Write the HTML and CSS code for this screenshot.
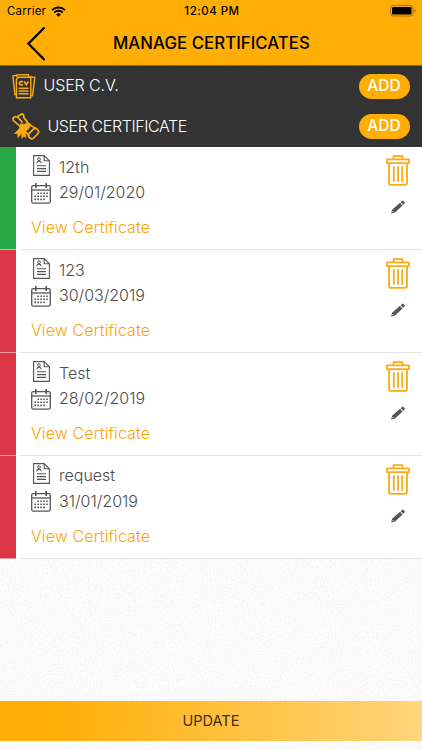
FILE: index.html
```html
<!DOCTYPE html>
<html lang="en">
<head>
    <meta charset="UTF-8">
    <meta name="viewport" content="width=device-width, initial-scale=1.0">
    <title>Manage Certificates</title>
    <link rel="stylesheet" href="styles.css">
</head>
<body>

    <!-- Icon definitions -->
    <svg class="icon-defs" width="0" height="0">
        <symbol id="icon-doc" viewBox="0 0 17 21">
            <path d="M.6.6h10.6l5.2 5.2v14.6H.6zM11.2.6v5.2h5.2M4 10.8h9M4 13.6h9M4 16.4h9" fill="none" stroke="#555" stroke-width="1.1"/>
            <circle cx="6" cy="4.2" r="1.4" fill="none" stroke="#555"/>
            <path d="M3.8 8.2c.2-1.6 1-2 2.2-2s2 .4 2.2 2" fill="none" stroke="#555" stroke-width="1.2"/>
        </symbol>
        <symbol id="icon-calendar" viewBox="0 0 20 21">
            <rect x=".7" y="2.7" width="18.6" height="17.4" rx="1.5" fill="none" stroke="#555" stroke-width="1.3"/>
            <path d="M.7 7h18.6" stroke="#555" stroke-width="1.3"/>
            <path d="M4.8 0v5M15.2 0v5" stroke="#555" stroke-width="1.6"/>
            <path d="M6.4 10.2h10.4M3.4 13.3h13.4M3.4 16.4h10.4" stroke="#555" stroke-width="1.6" stroke-dasharray="1.6 1.35"/>
        </symbol>
        <symbol id="icon-trash" viewBox="0 0 24 31">
            <path d="M7.5 4V1.2h9V4M1 4.3h22v3.8H1zM3 8.4v19.4q0 2 2 2h14q2 0 2-2V8.4" fill="none" stroke="#fcaa12" stroke-width="1.8" stroke-linejoin="round"/>
            <path d="M7.8 12v14M12 12v14M16.2 12v14" stroke="#fcaa12" stroke-width="1.8" stroke-linecap="round"/>
        </symbol>
        <symbol id="icon-pencil" viewBox="0 0 14 14">
            <path d="M.2 13.6l.9-3.8 7.9-7 2.5 2.7-7.7 7.2zM9.7 2.2l1.3-1.3q.7-.6 1.4 0l1.1 1.1q.6.7 0 1.4l-1.3 1.4z" fill="#555"/>
            <path d="M1.4 11l1.5 1.5" stroke="#fff" stroke-width=".8"/>
        </symbol>
    </svg>

    <!-- Header -->
    <div class="header">
        <div class="status-bar">
            <div class="carrier">
                <span>Carrier</span>
                <svg width="15" height="11" viewBox="0 0 15 11">
                    <path d="M1 4.2a9.2 9.2 0 0 1 13 0M3.3 6.5a6 6 0 0 1 8.4 0" fill="none" stroke="#000" stroke-width="1.9"/>
                    <path d="M7.5 10.8L5.2 8.4a3.3 3.3 0 0 1 4.6 0z"/>
                </svg>
            </div>
            <div class="time">12:04 PM</div>
            <svg class="battery" width="27" height="12" viewBox="0 0 27 12">
                <rect x=".5" y=".5" width="22.5" height="10.5" rx="2.6" fill="none" stroke="#a87300"/>
                <rect x="2" y="2" width="19.5" height="7.5" rx="1.3"/>
                <path d="M24.3 4v3.6q1.6-.5 1.6-1.8T24.3 4z" fill="#a87300"/>
            </svg>
        </div>
        <div class="nav-bar">
            <svg class="back" width="18" height="34" viewBox="0 0 18 34">
                <path d="M17 1L1.4 16.7 17 32.4" fill="none" stroke="#000" stroke-width="2.2" stroke-linecap="round"/>
            </svg>
            <h1>MANAGE CERTIFICATES</h1>
        </div>
    </div>

    <!-- Sections -->
    <div class="sections">
        <div class="section">
            <svg class="cv-icon" width="24" height="25" viewBox="0 0 24 25" fill="none" stroke="#fcaa12" stroke-width="1.4">
                <path d="M4.4 1.3L.9 2l2 18.6 1.5-.2M17 2.7l5.8.7-2.3 18.2-1.6-.2M5 3.2l-.1-2.3L16.4.7l.3 2"/>
                <path d="M6.6 3.2h12.2v20.6H4.4V5.4z"/>
                <path d="M6.6 14.2h10M6.6 17h10M6.6 19.8h10"/>
                <path d="M11 7.7Q7.4 7 7.4 9.2t3.6 1.6M12.2 7.5l2 3.2 2.2-3.2" stroke-width="1.7"/>
            </svg>
            <span class="section-name">USER C.V.</span>
            <button class="add-btn">ADD</button>
        </div>
        <div class="section">
            <svg class="scroll-icon" width="28" height="28" viewBox="0 0 28 28" fill="none" stroke="#fcaa12" stroke-width="1.7" stroke-linejoin="round">
                <path d="M8.5 13.6L2 8.2Q-.2 5.6 2 4.2t4.6.8l3.8 4.4"/>
                <path d="M5.4 3.4l4.8-2.6q2.1 1 1.5 3.6l4.2 5.2"/>
                <path d="M17.4 11.6l6.2 3.8M12.4 17.4l4.8 5.6"/>
                <rect x="15.8" y="17.4" width="11.4" height="6.4" rx="3.2" transform="rotate(-46 21.5 20.6)"/>
                <path d="M8.6 10.8l3.7.5 4-1.8 2.4 2-1.7 3.9-3.5 3-4.3-.5-1.9-2.7z" fill="#fcaa12" stroke-width=".8"/>
                <path d="M8.2 15l-5.6 5.4 3.2.2.2 4 5.2-6.2z" fill="#fcaa12" stroke-width=".8"/>
                <path d="M10.4 17l-.8 8.3 2.2-2 2.1 1.2-.6-7z" fill="#fcaa12" stroke-width=".6"/>
            </svg>
            <span class="section-name">USER CERTIFICATE</span>
            <button class="add-btn">ADD</button>
        </div>
    </div>

    <!-- Certificates -->
    <div class="certificates" id="certificates"></div>

    <!-- Paper texture -->
    <div class="spacer">
        <svg width="422" height="192">
            <filter id="grain" x="0" y="0" width="100%" height="100%" color-interpolation-filters="sRGB">
                <feTurbulence type="fractalNoise" baseFrequency="0.6" numOctaves="2" seed="4"/>
                <feColorMatrix values="0 0 0 0 0  0 0 0 0 0  0 0 0 0 0  .12 0 0 0 -.053"/>
            </filter>
            <rect width="422" height="192" filter="url(#grain)"/>
        </svg>
    </div>

    <button class="update-btn">UPDATE</button>

    <script>
        const certificates = [
            { name: "12th", date: "29/01/2020", status: "approved" },
            { name: "123", date: "30/03/2019", status: "rejected" },
            { name: "Test", date: "28/02/2019", status: "rejected" },
            { name: "request", date: "31/01/2019", status: "rejected" }
        ];

        const list = document.getElementById('certificates');

        certificates.forEach(cert => {
            const row = document.createElement('div');
            row.className = 'certificate';
            row.innerHTML = `
                <div class="status ${cert.status}"></div>
                <div class="details">
                    <div class="line"><svg class="doc"><use href="#icon-doc"/></svg><span>${cert.name}</span></div>
                    <div class="line"><svg class="calendar"><use href="#icon-calendar"/></svg><span>${cert.date}</span></div>
                    <a class="view">View Certificate</a>
                </div>
                <div class="actions">
                    <svg class="trash"><use href="#icon-trash"/></svg>
                    <svg class="pencil"><use href="#icon-pencil"/></svg>
                </div>`;
            list.appendChild(row);
        });
    </script>

</body>
</html>
```
FILE: styles.css
```css
body {
    margin: 0;
    height: 750px;
    display: flex;
    flex-direction: column;
    overflow: hidden;
    font-family: Inter, "Liberation Sans", sans-serif;
    background-color: #fdfdfd;
}
svg {
    display: block;
    flex-shrink: 0;
}
.icon-defs {
    position: absolute;
}
.header {
    height: 65px;
    background-color: #ffae05;
    border-bottom: 1px solid #8d681c;
    color: #000;
}
.status-bar {
    height: 22px;
    display: grid;
    grid-template-columns: 1fr auto 1fr;
    align-items: center;
    padding: 0 5px 0 7px;
    font-size: 11.5px;
}
.carrier {
    display: flex;
    align-items: center;
    gap: 5px;
    letter-spacing: 0.2px;
}
.time {
    font-weight: 500;
    letter-spacing: 0.5px;
}
.battery {
    justify-self: end;
}
.nav-bar {
    height: 43px;
    display: flex;
    align-items: center;
    padding-left: 27px;
}
h1 {
    margin: 0 0 0 68px;
    font-size: 16.8px;
    line-height: 43px;
    font-weight: 500;
    letter-spacing: 0.05px;
}
.sections {
    height: 81px;
    background-color: #333;
    box-sizing: border-box;
}
.section {
    height: 40.5px;
    display: flex;
    align-items: center;
    padding: 0 12.5px 0 12px;
    color: #fff;
}
.section-name {
    margin-left: 7.5px;
    padding-bottom: 2px;
    font-size: 16px;
    font-weight: 300;
    letter-spacing: -0.4px;
}
.cv-icon + .section-name {
    letter-spacing: -0.1px;
}
.add-btn {
    margin-left: auto;
    width: 51px;
    height: 25px;
    padding: 0 0 2px;
    border: none;
    border-radius: 13px;
    background-color: #ffae05;
    color: #fff;
    font-family: inherit;
    font-size: 15.5px;
    font-weight: 500;
    line-height: 23px;
}
.certificates {
    background-color: #fff;
}
.certificate {
    height: 102.9px;
    display: flex;
    background: linear-gradient(#e4e4e4, #e4e4e4) 20px 100% / 100% 1px no-repeat;
}
.status {
    width: 16px;
    box-sizing: border-box;
    border-bottom: 1px solid rgba(255, 255, 255, 0.5);
}
.approved {
    background-color: #28a745;
}
.rejected {
    background-color: #dc3545;
}
.details {
    flex-grow: 1;
    padding: 7px 0 0 15px;
}
.line {
    height: 25.5px;
    display: flex;
    align-items: center;
    color: #4c4c4c;
    font-size: 16px;
    font-weight: 300;
}
.doc {
    width: 17px;
    height: 21px;
    margin: -3px 9.5px 0 1.5px;
}
.calendar {
    width: 20px;
    height: 21px;
    margin: 2px 8px 0 0;
}
.view {
    display: block;
    margin-top: 9px;
    line-height: 26px;
    font-size: 16px;
    font-weight: 300;
    letter-spacing: 0.1px;
    color: #fca400;
}
.actions {
    width: 24px;
    padding: 8px 12px 0 0;
    display: flex;
    flex-direction: column;
    align-items: center;
}
.trash {
    width: 24px;
    height: 31px;
}
.pencil {
    width: 14px;
    height: 14px;
    margin-top: 14px;
}
.spacer {
    flex: 1;
    min-height: 0;
    overflow: visible;
}
.update-btn {
    position: relative;
    height: 40px;
    margin-bottom: 9px;
    padding: 0 0 2px;
    border: none;
    background: linear-gradient(to right, #ffae05, #ffae05 12%, #ffd57d);
    color: #3d2f10;
    font-family: inherit;
    font-size: 14.5px;
}
```
